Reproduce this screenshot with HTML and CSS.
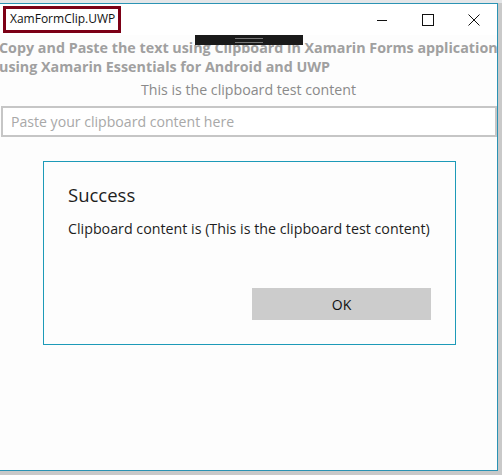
FILE: index.html
```html
<!DOCTYPE html>
<html lang="en">
<head>
    <meta charset="UTF-8">
    <meta name="viewport" content="width=device-width, initial-scale=1.0">
    <title>XamFormClip.UWP</title>
    <link rel="stylesheet" href="styles.css">
</head>
<body>
    <div class="desktop-strip"></div>

    <div class="window">
        <div class="titlebar">
            <div class="app-title">XamFormClip.UWP</div>
            <div class="caption-buttons">
                <span class="caption-btn">
                    <svg width="12" height="12" viewBox="0 0 12 12"><path d="M1 6.5h10" stroke="#111" stroke-width="1"/></svg>
                </span>
                <span class="caption-btn">
                    <svg width="12" height="12" viewBox="0 0 12 12"><rect x="0.5" y="0.5" width="11" height="11" fill="none" stroke="#111" stroke-width="1"/></svg>
                </span>
                <span class="caption-btn">
                    <svg width="12" height="12" viewBox="0 0 12 12"><path d="M0.5 0.5l11 11M11.5 0.5l-11 11" stroke="#111" stroke-width="1"/></svg>
                </span>
            </div>
        </div>

        <div class="page">
            <!-- debug toolbar that sits over the page -->
            <div class="debug-bar"><span></span></div>

            <h1 class="heading">Copy and Paste the text using Clipboard in Xamarin Forms application<br>using Xamarin Essentials for Android and UWP</h1>
            <p class="clip-text">This is the clipboard test content</p>
            <input class="entry" type="text" placeholder="Paste your clipboard content here">

            <div class="dialog">
                <h2 class="dialog-title">Success</h2>
                <p class="dialog-body">Clipboard content is (This is the clipboard test content)</p>
                <div class="dialog-actions">
                    <button class="dialog-btn">OK</button>
                </div>
            </div>
        </div>
    </div>
</body>
</html>
```

FILE: styles.css
```css
body {
    margin: 0;
    width: 502px;
    height: 475px;
    overflow: hidden;
    background-color: #c9c9c9;
    font-family: 'Open Sans', 'Noto Sans', sans-serif;
}
.desktop-strip {
    height: 3px;
    background-color: #e4e6e8;
}
.window {
    width: 498px;
    height: 468px;
    background-color: #fdfdfd;
    border: 1px solid #2b93b4;
    border-left: none;
    box-sizing: border-box;
    display: flex;
    flex-direction: column;
}
.titlebar {
    height: 31px;
    display: flex;
    align-items: center;
    justify-content: space-between;
    background-color: #fff;
}
.app-title {
    margin-left: 3px;
    padding: 2px 3px 3px 4px;
    border: 3px solid #7c0016;
    background-color: #fff;
    font-size: 12px;
    color: #111;
    line-height: 16px;
}
.caption-buttons {
    display: flex;
    height: 100%;
}
.caption-btn {
    width: 46px;
    display: flex;
    align-items: center;
    justify-content: center;
}
.page {
    position: relative;
    flex: 1;
}
.debug-bar {
    position: absolute;
    left: 195px;
    top: 0;
    width: 108px;
    height: 10px;
    background-color: #1a1a1a;
    display: flex;
    align-items: center;
    justify-content: center;
}
.debug-bar span {
    width: 28px;
    height: 3px;
    border-top: 1px solid #777;
    border-bottom: 1px solid #777;
}
.heading {
    margin: 3px 0 0 -1px;
    font-size: 14.3px;
    line-height: 19px;
    font-weight: bold;
    color: #a0a0a0;
    white-space: nowrap;
}
.clip-text {
    margin: 5px 0 0 0;
    text-align: center;
    font-size: 14.2px;
    line-height: 18px;
    color: #8a8a8a;
}
.entry {
    display: block;
    margin: 7px 0 0 1px;
    width: 496px;
    height: 31px;
    box-sizing: border-box;
    border: 2px solid #c6c6c6;
    padding: 0 8px;
    font-family: inherit;
    font-size: 14.1px;
    outline: none;
}
.entry::placeholder {
    color: #a8a8a8;
}
.dialog {
    margin: 24px 0 0 43px;
    width: 413px;
    height: 184px;
    box-sizing: border-box;
    border: 1px solid #1d9ab8;
    padding: 0 24px 24px 24px;
    display: flex;
    flex-direction: column;
}
.dialog-title {
    margin: 20px 0 0 0;
    font-size: 18.5px;
    font-weight: normal;
    line-height: 26px;
    color: #1e1e1e;
}
.dialog-body {
    margin: 11px 0 0 0;
    font-size: 14.25px;
    line-height: 20px;
    color: #1e1e1e;
}
.dialog-actions {
    margin-top: auto;
    display: flex;
    justify-content: flex-end;
}
.dialog-btn {
    width: 179px;
    height: 32px;
    border: none;
    background-color: #cccccc;
    font-family: inherit;
    font-size: 14px;
    color: #111;
}
```
